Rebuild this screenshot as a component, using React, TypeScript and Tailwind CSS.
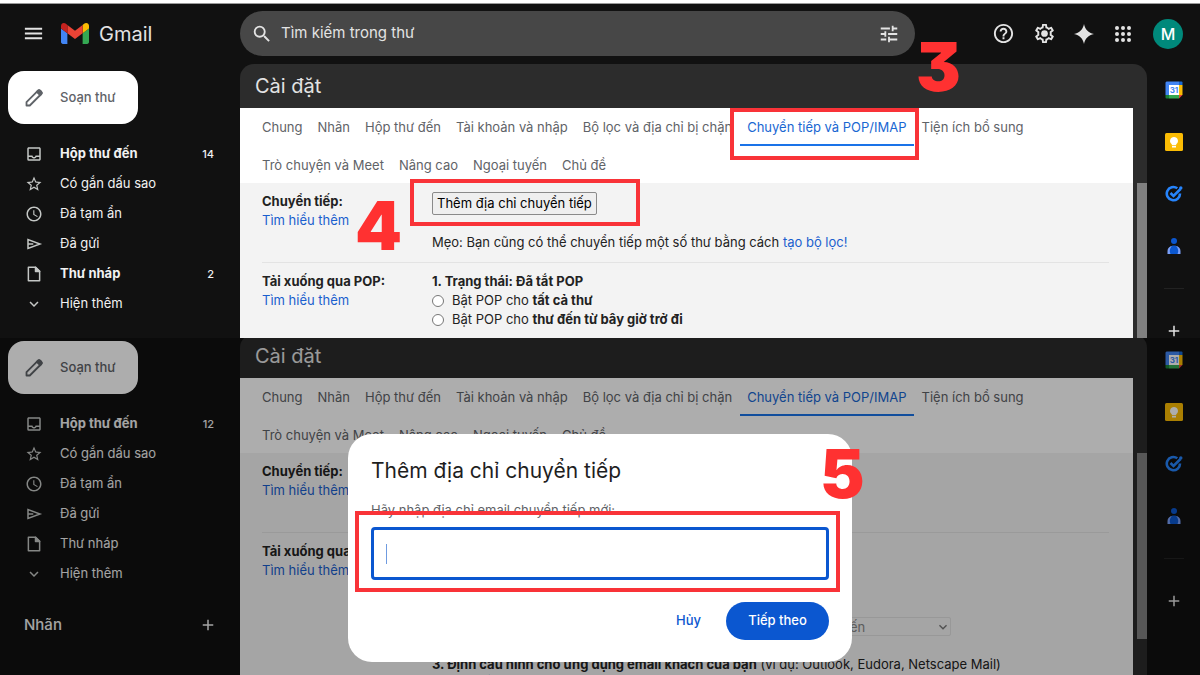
import { useId } from 'react';
import type { ReactNode } from 'react';
import {
  MdAccessTime,
  MdAdd,
  MdHelpOutline,
  MdKeyboardArrowDown,
  MdMenu,
  MdOutlineInbox,
  MdSearch,
  MdStarBorder,
  MdTune,
} from 'react-icons/md';

const GmailLogo = () => (
  <svg className="w-7 h-[21px]" viewBox="52 42 88 66">
    <path fill="#4285f4" d="M58 108h14V74L52 59v43c0 3.32 2.69 6 6 6" />
    <path fill="#34a853" d="M120 108h14c3.32 0 6-2.69 6-6V59l-20 15" />
    <path fill="#fbbc04" d="M120 48v26l20-15v-8c0-7.42-8.47-11.65-14.4-7.2" />
    <path fill="#ea4335" d="M72 74V48l24 18 24-18v26L96 92" />
    <path fill="#c5221f" d="M52 51v8l20 15V48l-5.6-4.2c-5.94-4.45-14.4-.22-14.4 7.2" />
  </svg>
);

const PencilIcon = () => (
  <svg width="20" height="20" viewBox="0 0 20 20" fill="none" stroke="currentColor" strokeWidth="1.8" strokeLinejoin="round">
    <path d="M2.500 17.500v-3.300L14 2.700a1.500 1.500 0 0 1 2.100 0l1.200 1.200a1.500 1.500 0 0 1 0 2.100L5.800 17.500z" />
    <path fill="currentColor" d="M12.800 3.900 14 2.700a1.500 1.500 0 0 1 2.100 0l1.200 1.200a1.500 1.500 0 0 1 0 2.100l-1.200 1.200z" />
  </svg>
);

const SendIcon = () => (
  <svg width="18" height="18" viewBox="0 0 24 24" fill="none" stroke="currentColor" strokeWidth="2">
    <path d="M4 6v12l16-6z" />
    <path d="M4 12h7" />
  </svg>
);

const DraftIcon = () => (
  <svg width="18" height="18" viewBox="0 0 24 24" fill="none" stroke="currentColor" strokeWidth="2" strokeLinejoin="round">
    <path d="M4.500 3H14l5.500 5.500V21h-15z" />
    <path fill="currentColor" d="M14 3v5.500h5.500z" />
  </svg>
);

const GearIcon = () => (
  <svg width="23" height="23" viewBox="0 0 24 24" fill="currentColor">
    <path d="M19.43 12.98c.04-.32.07-.64.07-.98 0-.34-.03-.66-.07-.98l2.11-1.65c.19-.15.24-.42.12-.64l-2-3.46a.5.5 0 0 0-.61-.22l-2.49 1c-.52-.4-1.08-.73-1.69-.98l-.38-2.65A.488.488 0 0 0 14 2h-4c-.25 0-.46.18-.49.42l-.38 2.65c-.61.25-1.17.59-1.69.98l-2.49-1a.5.5 0 0 0-.61.22l-2 3.46c-.13.22-.07.49.12.64l2.11 1.65c-.04.32-.07.65-.07.98 0 .33.03.66.07.98l-2.11 1.65c-.19.15-.24.42-.12.64l2 3.46c.12.22.38.3.61.22l2.49-1c.52.4 1.08.73 1.69.98l.38 2.65c.03.24.24.42.49.42h4c.25 0 .46-.18.49-.42l.38-2.65c.61-.25 1.17-.59 1.69-.98l2.49 1c.23.08.49 0 .61-.22l2-3.46a.5.5 0 0 0-.12-.64zm-1.98-1.71c.04.31.05.52.05.73s-.02.43-.05.73l-.14 1.13.89.7 1.08.84-.7 1.21-1.27-.51-1.04-.42-.9.68c-.43.32-.84.56-1.25.73l-1.06.43-.16 1.13-.2 1.35h-1.4l-.35-2.48-1.06-.43c-.43-.18-.83-.41-1.23-.71l-.91-.7-1.06.43-1.27.51-.7-1.21 1.97-1.54-.14-1.13c-.03-.31-.05-.54-.05-.74s.02-.43.05-.73l.14-1.13-.89-.7-1.08-.84.7-1.21 1.27.51 1.04.42.9-.68c.43-.32.84-.56 1.25-.73l1.06-.43.16-1.13.2-1.35h1.39l.35 2.48 1.06.43c.43.18.83.41 1.23.71l.91.7 1.06-.43 1.27-.51.7 1.21-1.07.85-.89.7z" />
    <circle cx="12" cy="12" r="3.500" />
  </svg>
);

const SparkIcon = () => (
  <svg width="20" height="20" viewBox="0 0 24 24" fill="currentColor">
    <path d="M12 0c1 6.2 5.4 10.8 12 12-6.600 1.200-11 5.800-12 12-1-6.200-5.400-10.800-12-12C6.600 10.800 11 6.200 12 0z" />
  </svg>
);

const AppsIcon = () => (
  <svg width="16" height="16" viewBox="0 0 16 16" fill="currentColor">
    {[2, 8, 14].map((y) => [2, 8, 14].map((x) => <circle key={`${x}-${y}`} cx={x} cy={y} r="2" />))}
  </svg>
);

const CalendarIcon = () => (
  <svg width="18" height="18" viewBox="0 0 18 18">
    <path fill="#4285f4" d="M1.500.5H14V4H4v10H.5V1.500z" />
    <path fill="#fbbc04" d="M14 4h3.500v10H14z" />
    <path fill="#1967d2" d="M14 .5h2.500a1 1 0 0 1 1 1V4H14z" />
    <path fill="#34a853" d="M4 14h10v3.500H4z" />
    <path fill="#188038" d="M.5 14H4v3.500H1.500a1 1 0 0 1-1-1z" />
    <path fill="#ea4335" d="M14 14h3.500L14 17.500z" />
    <path fill="#fff" d="M4 4h10v10H4z" />
    <text x="9" y="12" textAnchor="middle" fontSize="8" fontWeight="700" fill="#4285f4">31</text>
  </svg>
);

const KeepIcon = () => (
  <svg width="18" height="18" viewBox="0 0 18 18">
    <rect width="18" height="18" rx="1.500" fill="#fbbc04" />
    <path fill="#fff" d="M9 4a4 4 0 0 0-2.200 7.300v1h4.400v-1A4 4 0 0 0 9 4zM7 13h4v1.400H7z" />
  </svg>
);

const TasksIcon = () => (
  <svg width="18" height="18" viewBox="0 0 18 18" fill="none" stroke="#2684fc">
    <path strokeWidth="2.600" d="M12.300 3.300A6.600 6.600 0 1 0 15 8.500" />
    <path strokeWidth="2.600" d="M5.500 8 8.500 11 15.500 4" />
    <circle cx="15.800" cy="3" r="1.700" fill="#2684fc" stroke="none" />
  </svg>
);

const ContactsIcon = () => (
  <svg width="18" height="18" viewBox="0 0 18 18">
    <circle cx="9" cy="4" r="3" fill="#0b57d0" />
    <path fill="#7b9ff7" d="M2.500 17v-3a5 5 0 0 1 5-5h3a5 5 0 0 1 5 5v3z" />
    <path fill="#0b57d0" d="M5.500 17c-1.500-3-.5-6.500 2-8.500h3c2.500 2 3.500 5.500 2 8.500z" />
  </svg>
);

const Header = () => (
  <header className="flex items-start h-[60px] pt-[7px] text-[#e3e3e3]">
    <div className="w-60 h-[45px] flex items-center shrink-0 pl-[22px]">
      <button aria-label="Menu chính">
        <MdMenu size={23} />
      </button>
      <div className="flex items-center ml-4 gap-[10px]">
        <GmailLogo />
        <span className="text-[20px]">Gmail</span>
      </div>
    </div>
    <form className="flex-1 h-[45px] flex items-center rounded-full bg-[#474747] pl-[11px] pr-[15px]">
      <button type="button" aria-label="Tìm kiếm">
        <MdSearch size={22} />
      </button>
      <input
        type="text"
        aria-label="Tìm kiếm trong thư"
        placeholder="Tìm kiếm trong thư"
        className="flex-1 ml-2 text-[15px] bg-transparent outline-none placeholder:text-[#e3e3e3]"
      />
      <button type="button" aria-label="Bộ lọc tìm kiếm">
        <MdTune size={22} />
      </button>
    </form>
    <div className="w-[285px] h-[45px] flex items-center justify-end shrink-0 pr-[17px]">
      <button aria-label="Hỗ trợ" className="mr-[18px]">
        <MdHelpOutline size={23} />
      </button>
      <button aria-label="Cài đặt" className="mr-[18px]">
        <GearIcon />
      </button>
      <button aria-label="Gemini" className="mr-[21px]">
        <SparkIcon />
      </button>
      <button aria-label="Ứng dụng" className="mr-[22px]">
        <AppsIcon />
      </button>
      <button className="w-[30px] h-[30px] rounded-full bg-[#00897b] text-white text-[16px] font-medium">M</button>
    </div>
  </header>
);

type MenuItem = { label: string; icon: ReactNode; count?: number; bold?: boolean };

const Sidebar = ({ inbox, drafts }: { inbox: number; drafts?: number }) => {
  const menuItems: MenuItem[] = [
    { label: 'Hộp thư đến', icon: <MdOutlineInbox size={18} />, count: inbox, bold: true },
    { label: 'Có gắn dấu sao', icon: <MdStarBorder size={18} /> },
    { label: 'Đã tạm ẩn', icon: <MdAccessTime size={18} /> },
    { label: 'Đã gửi', icon: <SendIcon /> },
    { label: 'Thư nháp', icon: <DraftIcon />, count: drafts, bold: !!drafts },
    { label: 'Hiện thêm', icon: <MdKeyboardArrowDown size={18} /> },
  ];

  return (
    <aside className="w-60 shrink-0 pt-[7px] pl-2 text-[13px] text-[#f2f2f2]">
      <button className="flex items-center w-[130px] h-[53px] pl-4 rounded-2xl bg-white text-[#5f6368] font-medium">
        <span className="mr-4">
          <PencilIcon />
        </span>
        Soạn thư
      </button>
      <nav className="mt-[15px]">
        <ul>
          {menuItems.map((item) => (
            <li key={item.label}>
              <a href="#" className={`flex items-center h-[30px] pl-[17px] pr-[26px] ${item.bold ? 'font-bold' : ''}`}>
                <span className="mr-[17px] text-[#c4c7c5]">{item.icon}</span>
                <span className="flex-1">{item.label}</span>
                {item.count && <span className="text-[11px] font-medium">{item.count}</span>}
              </a>
            </li>
          ))}
        </ul>
      </nav>
      <div className="flex items-center justify-between mt-5 h-8 pl-4 pr-[23px]">
        <h2 className="text-[15px] font-medium">Nhãn</h2>
        <button aria-label="Tạo nhãn mới">
          <MdAdd size={18} />
        </button>
      </div>
    </aside>
  );
};

const ACTIVE_TAB = 'Chuyển tiếp và POP/IMAP';

const tabRows = [
  ['Chung', 'Nhãn', 'Hộp thư đến', 'Tài khoản và nhập', 'Bộ lọc và địa chỉ bị chặn', ACTIVE_TAB, 'Tiện ích bổ sung'],
  ['Trò chuyện và Meet', 'Nâng cao', 'Ngoại tuyến', 'Chủ đề'],
];

const Tabs = () => (
  <nav className="h-[75px] pl-[15px] bg-white text-[#5f6368]">
    {tabRows.map((row) => (
      <div key={row[0]} className="flex gap-px">
        {row.map((tab) => (
          <a
            key={tab}
            href="#"
            className={`h-[38px] px-[7px] flex items-center border-y-2 border-transparent whitespace-nowrap ${
              tab === ACTIVE_TAB ? 'text-[#1967d2] border-b-[#1a73e8]' : ''
            }`}
          >
            {tab}
          </a>
        ))}
      </div>
    ))}
  </nav>
);

const SettingRow = ({ title, children }: { title: string; children: ReactNode }) => (
  <section className="flex pt-[9px] pb-[10px] border-b border-[#e3e3e3]">
    <div className="w-[170px] shrink-0">
      <h3 className="font-bold">{title}</h3>
      <a href="#" className="text-[#1a5fce]">Tìm hiểu thêm</a>
    </div>
    <div className="flex-1">{children}</div>
  </section>
);

const Settings = () => {
  const id = useId();

  return (
    <main className="flex-1 min-w-0 rounded-t-[14px] bg-[#2c2c2c] overflow-hidden text-[13px] leading-[19px]">
      <h1 className="h-11 flex items-center pl-[15px] text-[20px] text-[#e3e3e3]">Cài đặt</h1>
      <div className="flex">
        <div className="flex-1 min-w-0">
          <Tabs />
          <div className="min-h-[300px] pl-[22px] pr-6 bg-[#f3f3f3] text-[#222]">
            <SettingRow title="Chuyển tiếp:">
              <button className="block h-[23px] px-1 border border-[#8a8a8a] rounded-[2px] bg-[#efefef] text-black">
                Thêm địa chỉ chuyển tiếp
              </button>
              <p className="mt-[18px]">
                Mẹo: Bạn cũng có thể chuyển tiếp một số thư bằng cách{' '}
                <a href="#" className="text-[#1a5fce]">tạo bộ lọc!</a>
              </p>
            </SettingRow>
            <SettingRow title="Tải xuống qua POP:">
              <p className="font-bold">1. Trạng thái: Đã tắt POP</p>
              <label className="flex items-center">
                <input type="radio" name={`${id}-pop`} className="w-3 h-3 mr-2" />
                <span>Bật POP cho <b>tất cả thư</b></span>
              </label>
              <label className="flex items-center">
                <input type="radio" name={`${id}-pop`} className="w-3 h-3 mr-2" />
                <span>Bật POP cho <b>thư đến từ bây giờ trở đi</b></span>
              </label>
              <div className="flex items-center mt-[18px] h-[19px]">
                <label htmlFor={`${id}-action`} className="w-[253px] font-bold">2. Khi thư được truy cập bằng POP</label>
                <div className="relative flex">
                  <select
                    id={`${id}-action`}
                    disabled
                    className="appearance-none w-[266px] h-[19px] pl-1 border border-[#e0e0e0] rounded-[2px] text-[#888]"
                  >
                    <option>giữ bản Gmail ở Hộp thư đến</option>
                  </select>
                  <MdKeyboardArrowDown size={16} className="absolute right-0 top-[2px] text-[#777]" />
                </div>
              </div>
              <p className="mt-[19px]">
                <b>3. Định cấu hình cho ứng dụng email khách của bạn</b> (ví dụ: Outlook, Eudora, Netscape Mail)
              </p>
              <a href="#" className="text-[#1a5fce]">Hướng dẫn định cấu hình</a>
            </SettingRow>
          </div>
        </div>
        <div className="w-[10px] h-[186px] mt-[75px] ml-1 bg-[#808080]" />
      </div>
    </main>
  );
};

const SideRail = () => (
  <aside className="w-[53px] shrink-0 flex flex-col items-center pt-[17px] text-[#e3e3e3]">
    <div className="flex flex-col gap-[34px]">
      <button aria-label="Lịch"><CalendarIcon /></button>
      <button aria-label="Keep"><KeepIcon /></button>
      <button aria-label="Tasks"><TasksIcon /></button>
      <button aria-label="Danh bạ"><ContactsIcon /></button>
    </div>
    <hr className="w-5 mt-[33px] border-[#222]" />
    <button aria-label="Tải tiện ích bổ sung" className="mt-[33px]">
      <MdAdd size={18} />
    </button>
  </aside>
);

const AddAddressDialog = () => (
  <div
    role="dialog"
    aria-labelledby="add-title"
    className="absolute left-1/2 top-24 -translate-x-1/2 w-[504px] h-[228px] px-[23px] pt-[22px] rounded-[24px] bg-white text-[13px]"
  >
    <h2 id="add-title" className="text-[21px] leading-[30px] text-[#1f1f1f]">Thêm địa chỉ chuyển tiếp</h2>
    <label htmlFor="forward-address" className="block mt-[14px] leading-[20px] text-[#5f6368]">
      Hãy nhập địa chỉ email chuyển tiếp mới:
    </label>
    <div className="flex items-center mt-[7px] h-[53px] px-3 border-[3px] border-[#0b57d0] rounded-[4px]">
      <span className="w-px h-5 bg-[#6f9be0]" />
      <input id="forward-address" type="text" className="flex-1 outline-none" />
    </div>
    <div className="flex justify-end items-center mt-[22px] font-medium">
      <button className="px-[25px] text-[#0b57d0]">Hủy</button>
      <button className="w-[103px] h-[38px] rounded-full bg-[#0b57d0] text-white">Tiếp theo</button>
    </div>
  </div>
);

const App = () => (
  <div className="relative flex flex-col h-screen overflow-hidden bg-[#111] font-['Inter','Liberation_Sans',sans-serif]">
    <div className="h-1 shrink-0 bg-white border-b border-[#9a9a9a]" />
    <Header />
    <div className="flex h-[274px] shrink-0 overflow-hidden">
      <Sidebar inbox={14} drafts={2} />
      <Settings />
      <SideRail />
    </div>

    <div className="relative flex-1 min-h-0 overflow-hidden">
      <div className="flex -mt-1">
        <Sidebar inbox={12} />
        <Settings />
        <SideRail />
      </div>
      <div className="absolute inset-0 bg-black/32" />
      <AddAddressDialog />
    </div>

    {/* step markers */}
    <div className="absolute left-[730px] top-[108px] w-[189px] h-[52px] border-4 border-[#f93338]" />
    <div className="absolute left-[410px] top-[179px] w-[230px] h-[47px] border-4 border-[#f93338]" />
    <div className="absolute left-[355px] top-[511px] w-[485px] h-[81px] border-4 border-[#f93338]" />
    <div className="text-[67px] leading-[67px] font-black text-[#ff3131] [font-feature-settings:'cv09']">
      <span className="absolute left-[916px] top-[33px]">3</span>
      <span className="absolute left-[355px] top-[192px]">4</span>
      <span className="absolute left-[820px] top-[440px]">5</span>
    </div>
  </div>
);

export default App;
